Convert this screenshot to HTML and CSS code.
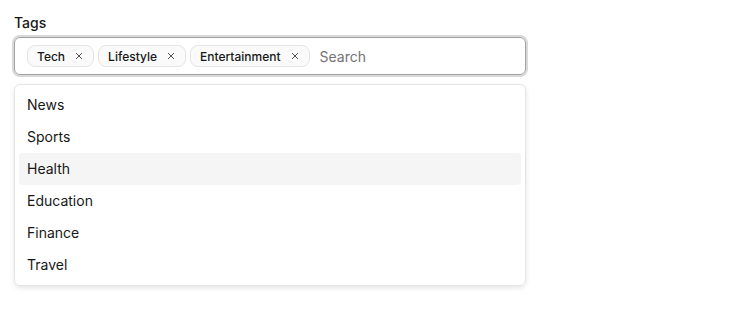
FILE: index.html
```html
<!DOCTYPE html>
<html lang="en">
<head>
    <meta charset="UTF-8">
    <title>Tags</title>
    <link rel="stylesheet" href="styles.css">
</head>
<body>
    <div class="field">
        <label class="field-label" for="tagSearch">Tags</label>
        <div class="tag-input">
            <span class="chip">Tech<svg class="chip-x" viewBox="0 0 8 8"><path d="M1 1L7 7M7 1L1 7"/></svg></span>
            <span class="chip">Lifestyle<svg class="chip-x" viewBox="0 0 8 8"><path d="M1 1L7 7M7 1L1 7"/></svg></span>
            <span class="chip">Entertainment<svg class="chip-x" viewBox="0 0 8 8"><path d="M1 1L7 7M7 1L1 7"/></svg></span>
            <input type="text" id="tagSearch" placeholder="Search">
        </div>
        <ul class="options">
            <li>News</li>
            <li>Sports</li>
            <li class="active">Health</li>
            <li>Education</li>
            <li>Finance</li>
            <li>Travel</li>
        </ul>
    </div>
</body>
</html>
```

FILE: styles.css
```css
body {
    font-family: Inter, "Liberation Sans", Arial, sans-serif;
    background-color: #fff;
    color: #171717;
    margin: 0;
    padding: 14px;
}

.field {
    width: 512px;
}

.field-label {
    display: block;
    font-size: 14px;
    font-weight: 500;
    line-height: 18px;
    margin-bottom: 5px;
}

.tag-input {
    display: flex;
    align-items: center;
    gap: 4px;
    height: 38px;
    box-sizing: border-box;
    padding: 0 12px;
    border: 1px solid #a3a3a3;
    border-radius: 6px;
    box-shadow: 0 0 0 2px #d9d9d9;
}

.chip {
    display: inline-flex;
    align-items: center;
    height: 22px;
    box-sizing: border-box;
    padding: 0 10px 0 9px;
    border: 1px solid #e5e5e5;
    border-radius: 8px;
    background-color: #fafafa;
    font-size: 12px;
    font-weight: 500;
    white-space: nowrap;
}

.chip-x {
    width: 8px;
    height: 8px;
    margin-left: 10px;
    stroke: #404040;
    stroke-width: 0.9;
    fill: none;
}

.tag-input input {
    flex: 1;
    min-width: 0;
    border: none;
    outline: none;
    font-family: inherit;
    font-size: 14px;
    margin-left: 6px;
    padding: 0;
    color: #171717;
}

.tag-input input::placeholder {
    color: #737373;
}

.options {
    list-style: none;
    margin: 9px 0 0;
    padding: 4px;
    border: 1px solid #e5e5e5;
    border-radius: 6px;
    box-shadow: 0 2px 5px rgba(0, 0, 0, 0.1);
}

.options li {
    height: 32px;
    line-height: 32px;
    padding: 0 8px;
    font-size: 14px;
    border-radius: 4px;
}

.options li.active {
    background-color: #f5f5f5;
}
```
